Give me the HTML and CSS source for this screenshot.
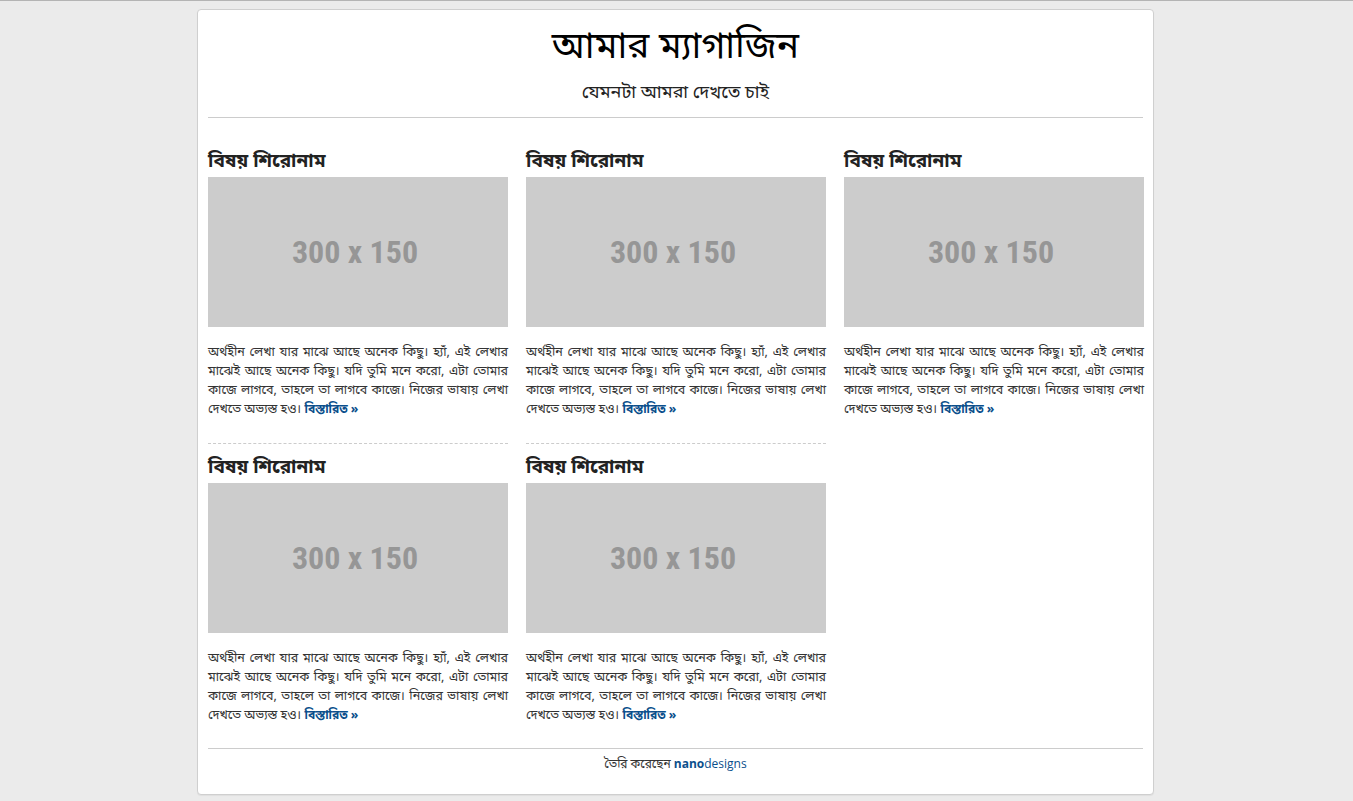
FILE: index.html
```html
<!DOCTYPE html>
<html lang="bn">
<head>
<meta charset="utf-8">
<title>আমার ম্যাগাজিন</title>
<link rel="stylesheet" href="styles.css">
</head>
<body>
<div class="page">
  <header class="masthead">
    <h1 class="site-title">আমার ম্যাগাজিন</h1>
    <p class="site-tagline">যেমনটা আমরা দেখতে চাই</p>
  </header>
  <main class="grid">
    <article class="post post-sep">
      <h2 class="post-title">বিষয় শিরোনাম</h2>
      <div class="thumb">300 x 150</div>
      <p class="post-text">অর্থহীন লেখা যার মাঝে আছে অনেক কিছু। হ্যাঁ, এই লেখার মাঝেই আছে অনেক কিছু। যদি তুমি মনে করো, এটা তোমার কাজে লাগবে, তাহলে তা লাগবে কাজে। নিজের ভাষায় লেখা দেখতে অভ্যস্ত হও। <a class="more" href="#">বিস্তারিত »</a></p>
    </article>
    <article class="post post-sep">
      <h2 class="post-title">বিষয় শিরোনাম</h2>
      <div class="thumb">300 x 150</div>
      <p class="post-text">অর্থহীন লেখা যার মাঝে আছে অনেক কিছু। হ্যাঁ, এই লেখার মাঝেই আছে অনেক কিছু। যদি তুমি মনে করো, এটা তোমার কাজে লাগবে, তাহলে তা লাগবে কাজে। নিজের ভাষায় লেখা দেখতে অভ্যস্ত হও। <a class="more" href="#">বিস্তারিত »</a></p>
    </article>
    <article class="post">
      <h2 class="post-title">বিষয় শিরোনাম</h2>
      <div class="thumb">300 x 150</div>
      <p class="post-text">অর্থহীন লেখা যার মাঝে আছে অনেক কিছু। হ্যাঁ, এই লেখার মাঝেই আছে অনেক কিছু। যদি তুমি মনে করো, এটা তোমার কাজে লাগবে, তাহলে তা লাগবে কাজে। নিজের ভাষায় লেখা দেখতে অভ্যস্ত হও। <a class="more" href="#">বিস্তারিত »</a></p>
    </article>
    <article class="post">
      <h2 class="post-title">বিষয় শিরোনাম</h2>
      <div class="thumb">300 x 150</div>
      <p class="post-text">অর্থহীন লেখা যার মাঝে আছে অনেক কিছু। হ্যাঁ, এই লেখার মাঝেই আছে অনেক কিছু। যদি তুমি মনে করো, এটা তোমার কাজে লাগবে, তাহলে তা লাগবে কাজে। নিজের ভাষায় লেখা দেখতে অভ্যস্ত হও। <a class="more" href="#">বিস্তারিত »</a></p>
    </article>
    <article class="post">
      <h2 class="post-title">বিষয় শিরোনাম</h2>
      <div class="thumb">300 x 150</div>
      <p class="post-text">অর্থহীন লেখা যার মাঝে আছে অনেক কিছু। হ্যাঁ, এই লেখার মাঝেই আছে অনেক কিছু। যদি তুমি মনে করো, এটা তোমার কাজে লাগবে, তাহলে তা লাগবে কাজে। নিজের ভাষায় লেখা দেখতে অভ্যস্ত হও। <a class="more" href="#">বিস্তারিত »</a></p>
    </article>
  </main>
  <footer class="site-footer">তৈরি করেছেন <a class="brand" href="#"><b>nano</b>designs</a></footer>
</div>
</body>
</html>
```
FILE: styles.css
```css
html {
  border-top: 1px solid #b4b4b4;
  background: #ebebeb;
}
body {
  margin: 0;
  padding: 8px 2px 7px 0;
  background: #ebebeb;
  font-family: "Noto Sans Bengali", "Lohit Bengali", "FreeSerif", "Noto Sans", sans-serif;
  color: #333;
}
.page {
  width: 935px;
  margin: 0 auto;
  padding: 10px;
  background: #fff;
  border: 1px solid #cfcfcf;
  border-radius: 4px;
  box-shadow: 0 1px 1px rgba(0,0,0,0.05);
}
.masthead {
  text-align: center;
  border-bottom: 1px solid #ccc;
  padding: 5px 0 12px;
}
.site-title {
  margin: 0;
  font-size: 37px;
  line-height: 48px;
  font-weight: normal;
  color: #000;
}
.site-tagline {
  margin: 8px 0 0;
  font-size: 18px;
  line-height: 24px;
  color: #222;
}
.grid {
  display: grid;
  grid-template-columns: repeat(3, 300px);
  column-gap: 18px;
  row-gap: 9px;
  padding-top: 29px;
}
.post {
  padding-bottom: 22px;
}
.post-sep {
  padding-bottom: 23px;
  border-bottom: 1px dashed #ccc;
}
.post-title {
  margin: 0 0 1px;
  padding-top: 3px;
  font-size: 19px;
  line-height: 26px;
  font-weight: bold;
  color: #222;
}
.thumb {
  height: 150px;
  padding-right: 6px;
  background: #ccc;
  color: #969696;
  display: flex;
  align-items: center;
  justify-content: center;
  font-family: "Liberation Sans Narrow", "Roboto Condensed", "DejaVu Sans", sans-serif;
  font-stretch: condensed;
  font-weight: bold;
  font-size: 32px;
}
.post-text {
  margin: 17px 0 0;
  font-size: 12.5px;
  line-height: 19px;
  text-align: justify;
  color: #333;
}
.more {
  color: #0b4f8c;
  font-weight: bold;
  font-size: 12px;
  text-decoration: none;
}
.site-footer {
  border-top: 1px solid #ccc;
  padding: 6px 0 10px;
  text-align: center;
  font-size: 12px;
  line-height: 18px;
  color: #333;
}
.brand {
  color: #0b4f8c;
  text-decoration: none;
  font-family: "Open Sans", sans-serif;
}
```
